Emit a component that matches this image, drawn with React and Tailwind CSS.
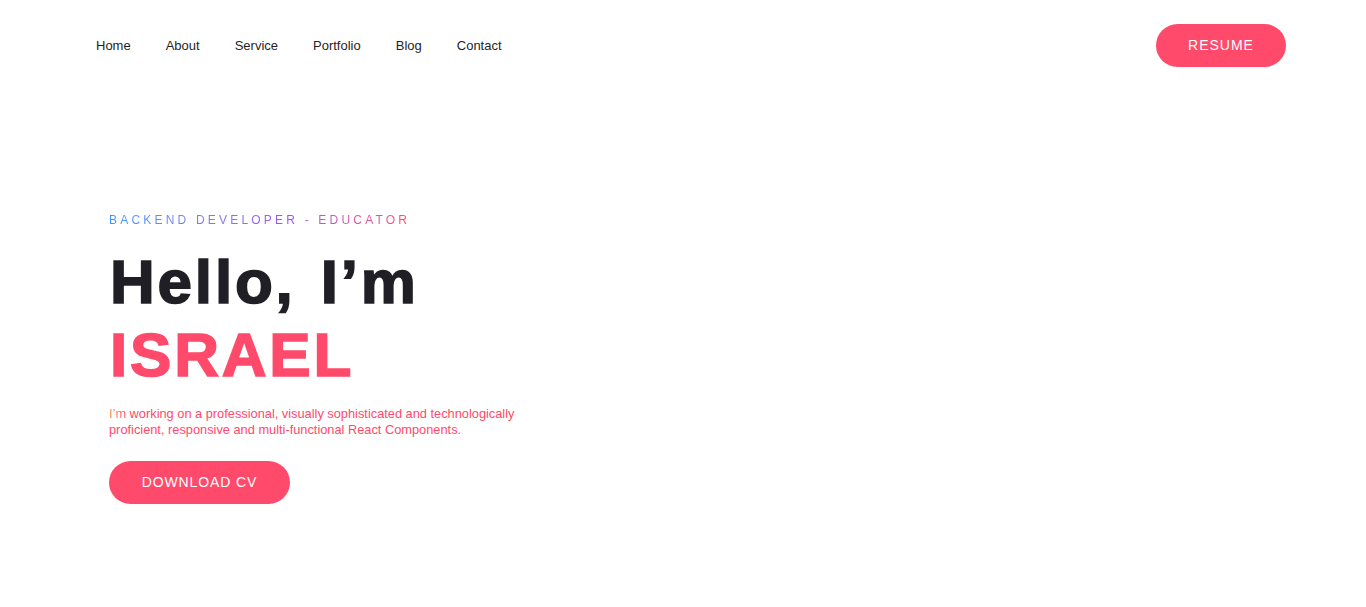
import React from 'react';

// --- Navigation ---

const links = ['Home', 'About', 'Service', 'Portfolio', 'Blog', 'Contact'];

const NavBar = () => (
    <header className="flex items-center justify-between px-20 pt-6">
        <nav className="flex items-center gap-[35px] pl-4">
            {links.map((l) => (
                <a key={l} href="#" className="text-[13px] text-[#1f1f25]">
                    {l}
                </a>
            ))}
        </nav>
        <button className="h-[43px] w-[130px] rounded-full bg-[#ff4a6b] text-[14px] font-medium tracking-[1px] text-white">
            RESUME
        </button>
    </header>
);

// --- Hero ---

const Hero = () => (
    <section className="pl-[109px] pt-[140px]">
        <p className="inline-block bg-gradient-to-r from-[#2f9bff] via-[#a052e8] via-60% to-[#ff4a6b] bg-clip-text text-[12px] leading-4 tracking-[3.2px] text-transparent">
            BACKEND DEVELOPER - EDUCATOR
        </p>
        <h1 className="mt-[14px] pl-[1px] text-[62px] font-bold leading-[73px] tracking-[2.8px] text-[#1f1f25] [-webkit-text-stroke:1.6px_currentColor]">
            Hello, <span className="ml-[5px]">I’m</span>
            <br />
            <span className="text-[#ff4a6b]">ISRAEL</span>
        </h1>
        <p className="mt-[15px] w-[440px] text-[12.8px] leading-4 text-[#ff4a6b]">
            <span className="bg-gradient-to-r from-[#f7903a] to-[#ff4a6b] bg-clip-text text-transparent">I’m</span> working on a professional, visually sophisticated and technologically proficient, responsive and multi-functional React Components.
        </p>
        <button className="mt-[23px] h-[43px] w-[181px] rounded-full bg-[#ff4a6b] text-[14px] font-medium tracking-[0.9px] text-white">
            DOWNLOAD CV
        </button>
    </section>
);

export default function App() {
    return (
        <div className="min-h-[607px] bg-white font-['Liberation_Sans',Arial,sans-serif]">
            <NavBar />
            <Hero />
        </div>
    );
}
